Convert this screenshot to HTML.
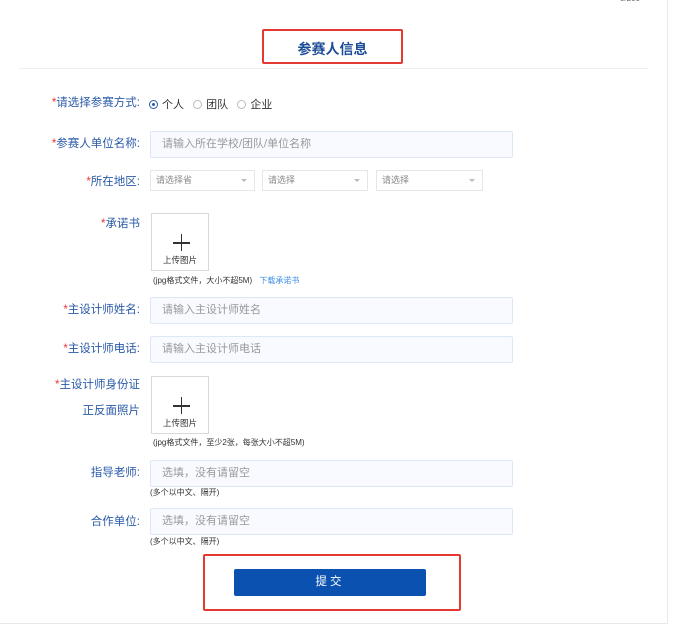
<!DOCTYPE html>
<html><head><meta charset="utf-8"><style>
*{margin:0;padding:0;box-sizing:border-box}
body{width:691px;height:627px;background:#fff;position:relative;overflow:hidden;font-family:"Liberation Sans","Noto Sans CJK SC",sans-serif;font-size:11px;color:#333}
.a{position:absolute}
.lbl{position:absolute;right:551px;color:#2b5aa8;font-size:11.5px;white-space:nowrap;line-height:14px}
.lbl i{color:#e33;font-style:normal}
.in{position:absolute;left:150px;width:363px;height:27px;background:#f8faff;border:1px solid #dde8f7;border-radius:2px;color:#999;font-size:11px;line-height:25px;padding-left:11px}
.sel{position:absolute;top:170px;height:21px;border:1px solid #e6e6e6;color:#888;font-size:9px;line-height:19px;padding-left:5px}
.sel:after{content:"";position:absolute;right:7px;top:8px;border:3px solid transparent;border-top:3px solid #bbb}
.up{position:absolute;left:151px;width:58px;height:58px;border:1px solid #d9d9d9;text-align:center;font-size:8.5px;color:#333}
.up .h{position:absolute;left:21px;top:28px;width:17px;height:1.5px;background:#333}
.up .v{position:absolute;left:28.8px;top:20px;width:1.5px;height:17px;background:#333}
.up span{position:absolute;left:0;right:0;top:40px}
.note{position:absolute;font-size:8px;color:#333;white-space:nowrap}
.rad{display:inline-block;width:9px;height:9px;border:1px solid #bbb;border-radius:50%;vertical-align:-1px;margin-right:4px;position:relative}
</style></head><body>
<div class="a" style="left:620px;top:-6px;font-size:8px;color:#666">0/200</div>
<div class="a" style="left:667px;top:0;width:1px;height:624px;background:#e8e8e8"></div>
<div class="a" style="left:0;top:623px;width:668px;height:1px;background:#e8e8e8"></div>
<div class="a" style="left:19px;top:68px;width:629px;height:1px;background:#eee"></div>
<div class="a" style="left:262px;top:29px;width:141px;height:35px;border:2px solid #e53a32;border-radius:2px"></div>
<div class="a" style="left:262px;top:39px;width:141px;text-align:center;font-size:14px;font-weight:bold;color:#1d4c97">参赛人信息</div>

<div class="lbl" style="top:96px"><i>*</i>请选择参赛方式:</div>
<div class="a" style="left:149px;top:96px;font-size:11px;color:#333;white-space:nowrap"><span class="rad" style="border-color:#2b5aa8"><span style="position:absolute;left:2px;top:2px;width:3px;height:3px;border-radius:50%;background:#2b5aa8"></span></span>个人 &nbsp; <span class="rad"></span>团队 &nbsp; <span class="rad"></span>企业</div>

<div class="lbl" style="top:137px"><i>*</i>参赛人单位名称:</div>
<div class="in" style="top:131px">请输入所在学校/团队/单位名称</div>

<div class="lbl" style="top:175px"><i>*</i>所在地区:</div>
<div class="sel" style="left:150px;width:105px">请选择省</div>
<div class="sel" style="left:262px;width:106px">请选择</div>
<div class="sel" style="left:376px;width:107px">请选择</div>

<div class="lbl" style="top:217px"><i>*</i>承诺书</div>
<div class="up" style="top:213px"><div class="h"></div><div class="v"></div><span>上传图片</span></div>
<div class="note" style="left:153px;top:275px">(jpg格式文件，大小不超5M) <span style="color:#3b8ee8;margin-left:5px">下载承诺书</span></div>

<div class="lbl" style="top:303px"><i>*</i>主设计师姓名:</div>
<div class="in" style="top:297px">请输入主设计师姓名</div>
<div class="lbl" style="top:342px"><i>*</i>主设计师电话:</div>
<div class="in" style="top:336px">请输入主设计师电话</div>

<div class="lbl" style="top:378px"><i>*</i>主设计师身份证</div>
<div class="lbl" style="top:404px">正反面照片</div>
<div class="up" style="top:376px"><div class="h"></div><div class="v"></div><span>上传图片</span></div>
<div class="note" style="left:153px;top:437px">(jpg格式文件，至少2张，每张大小不超5M)</div>

<div class="lbl" style="top:466px">指导老师:</div>
<div class="in" style="top:460px">选填，没有请留空</div>
<div class="note" style="left:150px;top:487px">(多个以中文、隔开)</div>
<div class="lbl" style="top:515px">合作单位:</div>
<div class="in" style="top:508px">选填，没有请留空</div>
<div class="note" style="left:150px;top:536px">(多个以中文、隔开)</div>

<div class="a" style="left:203px;top:554px;width:258px;height:57px;border:2px solid #e53a32;border-radius:2px"></div>
<div class="a" style="left:234px;top:569px;width:192px;height:27px;background:#0b52b0;border-radius:2px;color:#fff;text-align:center;line-height:27px;font-size:11.5px;letter-spacing:3px">提交</div>
</body></html>
